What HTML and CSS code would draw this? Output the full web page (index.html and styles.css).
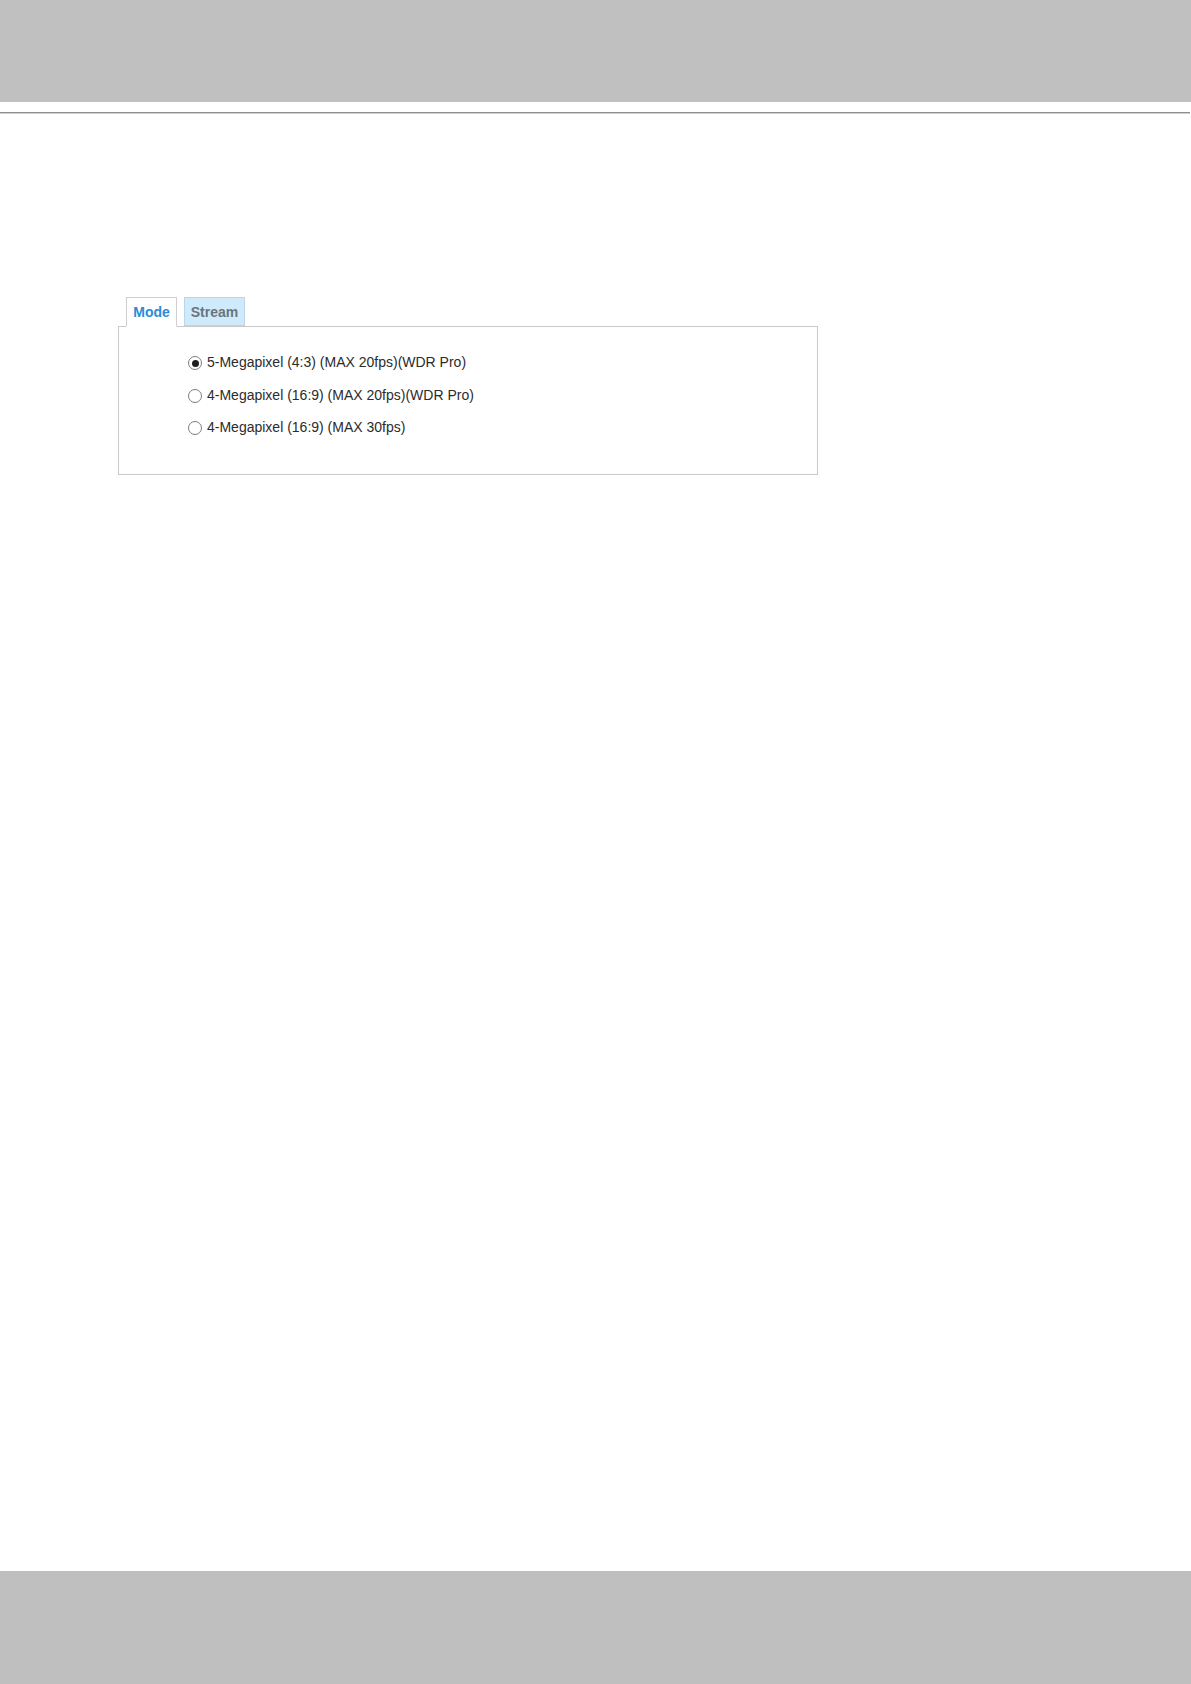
FILE: index.html
```html
<!DOCTYPE html>
<html>
<head>
<meta charset="utf-8">
<link rel="stylesheet" href="styles.css">
</head>
<body>
<div class="top-bar"></div>
<div class="divider"></div>
<main class="main">
  <div class="settings">
    <div class="tabs">
      <div class="tab tab-active">Mode</div>
      <div class="tab tab-idle">Stream</div>
    </div>
    <div class="panel">
      <div class="option"><span class="radio radio-on"></span><span class="label">5-Megapixel (4:3) (MAX 20fps)(WDR Pro)</span></div>
      <div class="option"><span class="radio"></span><span class="label">4-Megapixel (16:9) (MAX 20fps)(WDR Pro)</span></div>
      <div class="option"><span class="radio"></span><span class="label">4-Megapixel (16:9) (MAX 30fps)</span></div>
    </div>
  </div>
</main>
<div class="bottom-bar"></div>
</body>
</html>
```
FILE: styles.css
```css
html, body {
  margin: 0;
  padding: 0;
  height: 100%;
}
body {
  display: flex;
  flex-direction: column;
  background: #ffffff;
  font-family: "Liberation Sans", Arial, sans-serif;
}
.top-bar {
  height: 102px;
  background: #c0c0c0;
  flex: none;
}
.divider {
  margin-top: 10px;
  height: 1px;
  background: #8e8e8e;
  border-bottom: 1px solid #d0d0d0;
  margin-right: 1px;
  flex: none;
}
.main {
  flex: 1;
  padding: 183px 0 0 118px;
}
.settings {
  width: 700px;
}
.tabs {
  display: flex;
  gap: 7px;
  padding-left: 8px;
  position: relative;
  z-index: 1;
  margin-bottom: -1px;
}
.tab {
  height: 28px;
  line-height: 28px;
  font-size: 14px;
  font-weight: bold;
  text-align: center;
  box-sizing: border-box;
}
.tab-active {
  width: 51px;
  height: 30px;
  background: #ffffff;
  color: #2a8bd6;
  border: 1px solid #cfcfcf;
  border-bottom: 1px solid #ffffff;
}
.tab-idle {
  width: 61px;
  height: 29px;
  background: #cfeafb;
  color: #6a757d;
  border: 1px solid #b9d6ea;
}
.panel {
  border: 1px solid #c9c9c9;
  height: 149px;
  box-sizing: border-box;
  padding: 19px 0 0 68px;
}
.option {
  display: flex;
  align-items: center;
  height: 32.5px;
  font-size: 14px;
  color: #2b2b2b;
}
.radio {
  width: 14px;
  height: 14px;
  box-sizing: border-box;
  border: 1px solid #7c7c7c;
  border-radius: 50%;
  margin: 2px 5px 0 1px;
  display: flex;
  align-items: center;
  justify-content: center;
  background: #ffffff;
  flex: none;
}
.radio-on::after {
  content: "";
  width: 7px;
  height: 7px;
  border-radius: 50%;
  background: #1e1e1e;
}
.bottom-bar {
  height: 113px;
  background: #bfbfbf;
  flex: none;
}
```
